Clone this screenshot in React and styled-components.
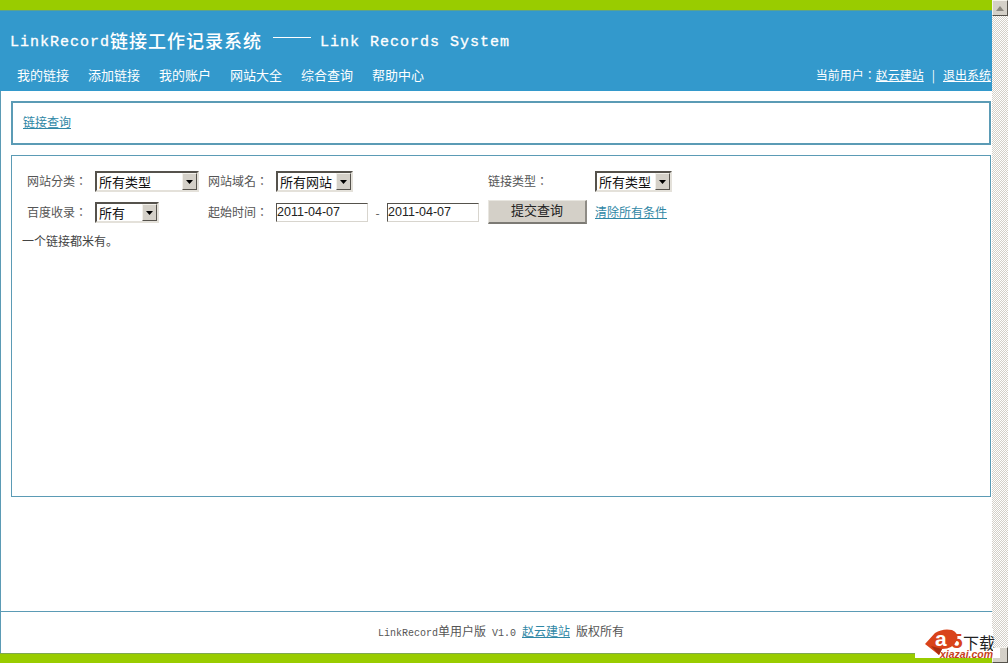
import React from "react";
import styled, { createGlobalStyle } from "styled-components";

const CJK = `"Noto Sans CJK SC", "Liberation Sans", sans-serif`;
const CJK_TC = `"Noto Sans CJK TC", "Noto Sans CJK SC", sans-serif`;
const MONO = `"Liberation Mono", "Noto Sans CJK SC", monospace`;

const GlobalStyle = createGlobalStyle`
  html, body {
    margin: 0;
    padding: 0;
    background: #fff;
    overflow: hidden;
  }
`;

const App = () => {
  return (
    <Shell>
      <GlobalStyle />
      <Page>
        <TopBar />
        <Header>
          <Title>
            <TitleLatin>LinkRecord</TitleLatin>链接工作记录系统
            <Dash />
            <TitleLatin>Link Records System</TitleLatin>
          </Title>
          <NavRow>
            <Nav>
              {["我的链接", "添加链接", "我的账户", "网站大全", "综合查询", "帮助中心"].map((item) => (
                <NavItem key={item}>{item}</NavItem>
              ))}
            </Nav>
            <UserInfo>
              当前用户：<UserLink>赵云建站</UserLink>
              <Sep>|</Sep>
              <UserLink>退出系统</UserLink>
            </UserInfo>
          </NavRow>
        </Header>
        <Main>
          <CrumbPanel>
            <TextLink>链接查询</TextLink>
          </CrumbPanel>
          <QueryPanel>
            <FormGrid>
              <Label>网站分类：</Label>
              <Select $width={104} $value="所有类型" />
              <Label>网站域名：</Label>
              <Select $width={77} $value="所有网站" />
              <Label>链接类型：</Label>
              <Select $width={77} $value="所有类型" />

              <Label>百度收录：</Label>
              <Select $width={64} $value="所有" />
              <Label>起始时间：</Label>
              <DateRange>
                <DateInput>2011-04-07</DateInput>
                <DateSep>-</DateSep>
                <DateInput>2011-04-07</DateInput>
              </DateRange>
              <SubmitButton>提交查询</SubmitButton>
              <ClearLink>清除所有条件</ClearLink>
            </FormGrid>
            <EmptyNote>一个链接都米有。</EmptyNote>
          </QueryPanel>
        </Main>
        <Footer>
          <FooterText>
            <FooterLatin>LinkRecord</FooterLatin>单用户版<FooterLatin> V1.0 </FooterLatin>
            <TextLink>赵云建站</TextLink>
            <FooterLatin> </FooterLatin>版权所有
          </FooterText>
        </Footer>
        <BottomBar />
      </Page>
      <Scrollbar>
        <ScrollButton>
          <svg width="10" height="7" viewBox="0 0 10 7">
            <path d="M5 1 L9 6 L1 6 Z" fill="#8a8780" />
          </svg>
        </ScrollButton>
        <ScrollButton />
      </Scrollbar>
      <Watermark>
        <LogoMark width="42" height="30" viewBox="0 0 42 30">
          <path d="M3 16 L13 5 Q21 0 30 2 Q37 5 35 12 Q31 21 20 21 L17 27 Z" fill="#d9431a" />
          <path d="M9 18 L20 21 L17 27 Z" fill="#a82c10" />
          <text x="13" y="18" fontFamily="Liberation Sans" fontWeight="700" fontSize="21" fill="#fff">a</text>
          <text x="29" y="20" fontFamily="Liberation Sans" fontWeight="700" fontSize="21" fill="#d9431a">5</text>
        </LogoMark>
        <WatermarkText>
          <WatermarkTitle>下载</WatermarkTitle>
          <WatermarkDomain>xiazai.com</WatermarkDomain>
        </WatermarkText>
      </Watermark>
    </Shell>
  );
};

const Select = ({ $width, $value }) => (
  <SelectBox $width={$width}>
    <SelectValue>{$value}</SelectValue>
    <SelectArrow>
      <svg width="7" height="4" viewBox="0 0 7 4">
        <path d="M0 0 H7 L3.5 4 Z" fill="#000" />
      </svg>
    </SelectArrow>
  </SelectBox>
);

const Shell = styled.div`
  position: relative;
  display: flex;
  width: 1008px;
  height: 663px;
  overflow: hidden;
  font-family: ${CJK};
  font-size: 12px;
  color: #444;
`;

const Page = styled.div`
  flex: 1;
  min-width: 0;
  display: flex;
  flex-direction: column;
`;

const TopBar = styled.div`
  height: 10px;
  flex: none;
  background: #99cc00;
`;

const BottomBar = styled(TopBar)`
  box-sizing: border-box;
  border-top: 1px solid #7fa850;
`;

const Header = styled.header`
  height: 81px;
  flex: none;
  box-sizing: border-box;
  background: #3399cc;
  border-top: 1px solid #5ca38c;
  color: #fff;
  padding: 17px 0 0 10px;
`;

const Title = styled.div`
  display: flex;
  align-items: center;
  height: 24px;
  font-size: 18px;
  font-weight: 500;
  letter-spacing: 1px;
  white-space: pre;
`;

const TitleLatin = styled.span`
  padding-top: 4px;
  font-family: "Liberation Mono", monospace;
  font-size: 15px;
  font-weight: 400;
  -webkit-text-stroke: 0.3px #fff;
  letter-spacing: 1px;
  white-space: pre;
`;

const Dash = styled.span`
  width: 38px;
  height: 1px;
  margin: 0 9px 6px 11px;
  background: #fff;
`;

const NavRow = styled.div`
  display: flex;
  justify-content: space-between;
  align-items: center;
  height: 20px;
  margin-top: 13px;
  padding-left: 7px;
`;

const Nav = styled.nav`
  display: flex;
  gap: 19px;
`;

const NavItem = styled.span`
  font-size: 13px;
  line-height: 20px;
`;

const UserInfo = styled.div`
  display: flex;
  align-items: center;
  font-family: ${CJK_TC};
  font-size: 12px;
  line-height: 20px;
  padding-right: 1px;
`;

const UserLink = styled.span`
  font-family: ${CJK};
  text-decoration: underline;
`;

const Sep = styled.span`
  margin: 0 8px 0 8px;
`;

const Main = styled.main`
  flex: 1;
  min-height: 0;
  box-sizing: border-box;
  display: flex;
  flex-direction: column;
  gap: 10px;
  padding: 10px 1px 0 10px;
  border-left: 1px solid #5b9bb5;
`;

const CrumbPanel = styled.section`
  height: 44px;
  box-sizing: border-box;
  display: flex;
  align-items: center;
  padding: 0 10px 3px;
  border: 2px solid #5b9bb5;
`;

const QueryPanel = styled.section`
  height: 342px;
  box-sizing: border-box;
  padding: 15px 10px 0;
  border: 1px solid #5b9bb5;
`;

const TextLink = styled.span`
  color: #2f87a5;
  text-decoration: underline;
  font-size: 12px;
`;

const ClearLink = styled(TextLink)`
  padding-bottom: 2px;
`;

const FormGrid = styled.div`
  display: grid;
  grid-template-columns: 68px 113px 68px 212px 107px auto;
  grid-auto-rows: 21px;
  row-gap: 10px;
  align-items: center;
  justify-content: start;
  padding-left: 5px;
`;

const Label = styled.span`
  padding-bottom: 2px;
  color: #555;
  font-family: ${CJK_TC};
  font-size: 12px;
`;

const SelectBox = styled.div`
  width: ${(p) => p.$width}px;
  height: 21px;
  box-sizing: border-box;
  display: flex;
  align-items: stretch;
  background: #fff;
  border: 2px solid;
  border-color: #55524c #e4e1da #e4e1da #55524c;
`;

const SelectValue = styled.span`
  flex: 1;
  padding-left: 2px;
  font-size: 13px;
  line-height: 17px;
  color: #111;
  white-space: nowrap;
`;

const SelectArrow = styled.span`
  flex: none;
  width: 15px;
  display: flex;
  align-items: center;
  justify-content: center;
  box-sizing: border-box;
  background: #d4d0c8;
  border: 1px solid;
  border-color: #f2f0ea #55524c #55524c #f2f0ea;
`;

const DateRange = styled.div`
  display: flex;
  align-items: center;
`;

const DateInput = styled.div`
  width: 92px;
  height: 19px;
  box-sizing: border-box;
  background: #fff;
  border: 1px solid;
  border-color: #55524c #d8d5ce #d8d5ce #55524c;
  font-family: "Liberation Sans", sans-serif;
  font-size: 12.5px;
  line-height: 17px;
  color: #222;
`;

const DateSep = styled.span`
  width: 19px;
  text-align: center;
  color: #555;
`;

const SubmitButton = styled.div`
  width: 99px;
  height: 24px;
  margin-top: -2px;
  box-sizing: border-box;
  padding-bottom: 3px;
  display: flex;
  align-items: center;
  justify-content: center;
  background: #d4d0c8;
  border-bottom: 2px solid #7c7a74;
  border-right: 2px solid #8e8b85;
  border-top: 1px solid #e8e6e0;
  border-left: 1px solid #e8e6e0;
  font-size: 13px;
  color: #222;
`;

const EmptyNote = styled.p`
  margin: 11px 0 0;
  font-size: 12px;
  line-height: 14px;
  color: #444;
`;

const Footer = styled.footer`
  height: 42px;
  flex: none;
  box-sizing: border-box;
  display: flex;
  align-items: center;
  justify-content: center;
  padding: 0 0 4px 9px;
  border-top: 1px solid #5b9bb5;
  border-left: 1px solid #5b9bb5;
`;

const FooterText = styled.div`
  font-size: 12px;
  color: #555;
  white-space: pre;
`;

const FooterLatin = styled.span`
  font-family: ${MONO};
  font-size: 10px;
`;

const Scrollbar = styled.aside`
  width: 16px;
  flex: none;
  display: flex;
  flex-direction: column;
  justify-content: space-between;
  background: repeating-conic-gradient(#d4d0c8 0 25%, #fff 0 50%) 0 0 / 2px 2px;
`;

const ScrollButton = styled.div`
  width: 16px;
  height: 16px;
  box-sizing: border-box;
  display: flex;
  align-items: center;
  justify-content: center;
  background: #d4d0c8;
  border: 1px solid;
  border-color: #f4f2ec #55524c #55524c #f4f2ec;
`;

const Watermark = styled.div`
  position: absolute;
  left: 915px;
  top: 628px;
  width: 78px;
  height: 30px;
  display: flex;
  padding-left: 7px;
  box-sizing: border-box;
  background: #fff;

  &::after {
    content: "";
    position: absolute;
    left: 78px;
    top: 20px;
    width: 7px;
    height: 10px;
    background: #fff;
  }
`;

const LogoMark = styled.svg`
  flex: none;
`;

const WatermarkText = styled.div`
  flex: none;
  display: flex;
  flex-direction: column;
  margin-left: -24px;
  white-space: nowrap;
`;

const WatermarkTitle = styled.span`
  height: 22px;
  box-sizing: border-box;
  padding: 6px 0 0 23px;
  font-size: 16px;
  line-height: 16px;
  color: #222;
`;

const WatermarkDomain = styled.span`
  font-family: "Liberation Sans", sans-serif;
  font-size: 10.5px;
  line-height: 8px;
  font-weight: 700;
  font-style: italic;
  color: #c8401a;
`;

export default App;
